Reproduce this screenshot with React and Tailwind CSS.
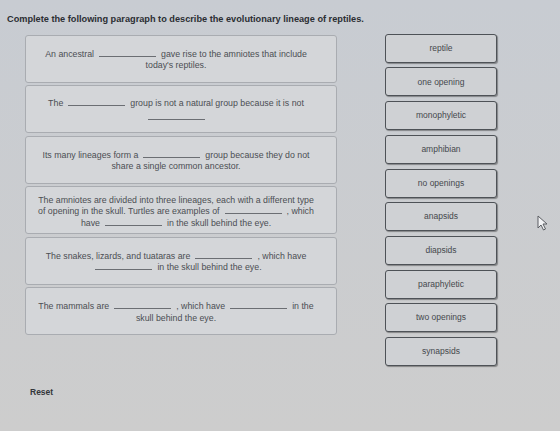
const choices = [
  "reptile",
  "one opening",
  "monophyletic",
  "amphibian",
  "no openings",
  "anapsids",
  "diapsids",
  "paraphyletic",
  "two openings",
  "synapsids",
];

function Blank() {
  return <span className="inline-block w-[57px] mx-[5px] border-b border-[#6b6e73] align-baseline" />;
}

function Prompt({ children }) {
  return (
    <div className="h-[48px] w-[312px] rounded-[3px] border border-[#a9acb1] bg-[#d4d6d9] flex flex-col items-center justify-center pt-[3px] pr-[10px] text-[8.8px] leading-[11.5px] text-[#4b4e53] text-center">
      {children}
    </div>
  );
}

function Choice({ label }) {
  return (
    <div className="h-[29px] w-[112px] rounded-[3px] border border-[#4e5257] bg-[#cfd1d4] shadow-[1px_1px_1px_rgba(0,0,0,0.35)] flex items-center justify-center text-[8.5px] text-[#45484d]">
      {label}
    </div>
  );
}

export default function App() {
  return (
    <div
      className="relative h-[431px] w-[560px] overflow-hidden bg-gradient-to-b from-[#c8ccd2] to-[#cdcdcd]"
      style={{ fontFamily: '"Liberation Sans", Arial, sans-serif' }}
    >
      <div className="pl-[7px] pt-[13px] text-[9.2px] font-bold text-[#2b2e33]">
        Complete the following paragraph to describe the evolutionary lineage of reptiles.
      </div>

      <div className="flex items-start mt-[7px]">
        <div className="ml-[25px] mt-[1px] flex flex-col gap-[2.5px]">
          <Prompt>
            <div>An ancestral<Blank />gave rise to the amniotes that include</div>
            <div>today's reptiles.</div>
          </Prompt>
          <Prompt>
            <div>The<Blank />group is not a natural group because it is not</div>
            <div className="mt-[3px]"><Blank /></div>
          </Prompt>
          <Prompt>
            <div>Its many lineages form a<Blank />group because they do not</div>
            <div>share a single common ancestor.</div>
          </Prompt>
          <Prompt>
            <div>The amniotes are divided into three lineages, each with a different type</div>
            <div>of opening in the skull. Turtles are examples of<Blank />, which</div>
            <div>have<Blank />in the skull behind the eye.</div>
          </Prompt>
          <Prompt>
            <div>The snakes, lizards, and tuataras are<Blank />, which have</div>
            <div><Blank />in the skull behind the eye.</div>
          </Prompt>
          <Prompt>
            <div>The mammals are<Blank />, which have<Blank />in the</div>
            <div>skull behind the eye.</div>
          </Prompt>
        </div>

        <div className="ml-[48px] flex flex-col gap-[4.7px]">
          {choices.map((c) => (
            <Choice key={c} label={c} />
          ))}
        </div>
      </div>

      <div className="pl-[30px] mt-[20px] text-[8.5px] font-bold text-[#33363a]">Reset</div>

      {/* mouse pointer */}
      <svg className="absolute left-[537px] top-[215px]" width="11" height="16" viewBox="0 0 11 16">
        <path d="M1 1 L1 13 L4 10 L6.5 15 L8.5 14 L6 9 L10 9 Z" fill="#f2f3f5" stroke="#5a5d62" strokeWidth="1" strokeLinejoin="round" />
      </svg>
    </div>
  );
}
